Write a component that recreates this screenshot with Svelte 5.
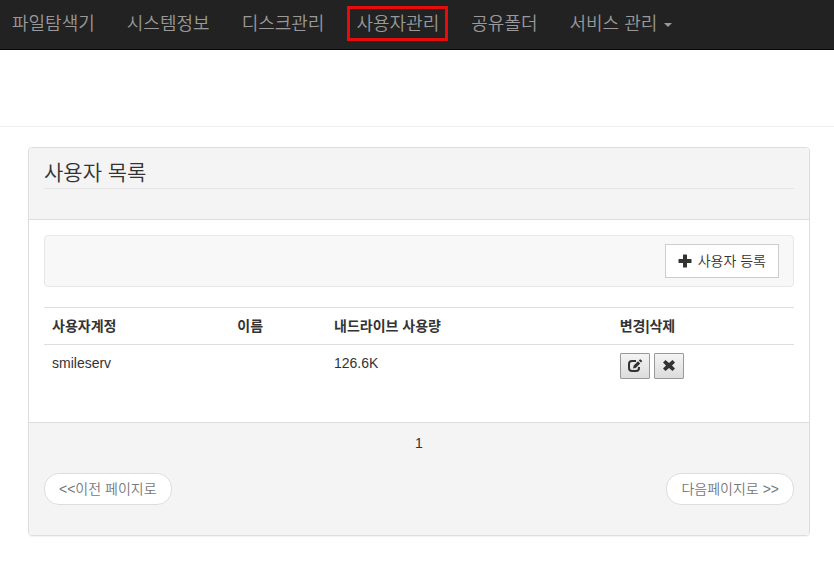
<script>
  const menu = ['파일탐색기', '시스템정보', '디스크관리', '사용자관리', '공유폴더'];
  const current = '사용자관리';

  let users = [
    {account: 'smileserv', name: '', usage: '126.6K'}
  ];
  let page = 1;

  function removeUser(account) {
    users = users.filter((user) => user.account !== account);
  }
</script>

<nav class="navbar">
  {#each menu as item}
    <a href="#top" class:current={item === current}>{item}</a>
  {/each}
  <a href="#top">서비스 관리 <span class="caret"></span></a>
</nav>

<header class="page-header"></header>

<main class="panel">
  <div class="panel-heading">
    <h1>사용자 목록</h1>
  </div>

  <div class="panel-body">
    <div class="toolbar">
      <button type="button" class="btn-add">
        <svg width="14" height="14" viewBox="0 0 14 14" aria-hidden="true">
          <path d="M5.5 .5h3q.5 0 .5.5v4h4q.5 0 .5.5v3q0 .5-.5.5H9v4q0 .5-.5.5h-3Q5 13.500 5 13V9H1q-.5 0-.5-.5v-3Q.5 5 1 5h4V1q0-.5.5-.5z" />
        </svg>
        사용자 등록
      </button>
    </div>

    <table>
      <colgroup>
        <col class="col-account" />
        <col class="col-name" />
        <col class="col-usage" />
        <col />
      </colgroup>
      <thead>
        <tr>
          <th>사용자계정</th>
          <th>이름</th>
          <th>내드라이브 사용량</th>
          <th>변경|삭제</th>
        </tr>
      </thead>
      <tbody>
        {#each users as user}
          <tr>
            <td>{user.account}</td>
            <td>{user.name}</td>
            <td>{user.usage}</td>
            <td>
              <div class="actions">
                <button type="button" aria-label="변경">
                  <svg width="16" height="16" viewBox="0 0 16 16" aria-hidden="true">
                    <path class="line" d="M9 3H5Q2 3 2 6v4q0 3 3 3h4q3 0 3-3V9" />
                    <path d="M6 10.500l.7-3L11 3.200l2.200 2.200L9 9.700zM11.800 2.400l1-1q.4-.4.8 0l1.400 1.400q.4.4 0 .8l-1 1z" />
                  </svg>
                </button>
                <button type="button" aria-label="삭제" on:click={() => removeUser(user.account)}>
                  <svg width="14" height="14" viewBox="0 0 14 14" aria-hidden="true">
                    <path d="M3.500 1L7 4l3.500-3L13 3.500 10 6.500l3 3L10.500 12 7 9l-3.500 3L1 9.500l3-3-3-3z" />
                  </svg>
                </button>
              </div>
            </td>
          </tr>
        {/each}
      </tbody>
    </table>
  </div>

  <footer class="panel-footer">
    <div class="page-number">{page}</div>
    <div class="pager">
      <a href="#top">&lt;&lt;이전 페이지로</a>
      <a href="#top">다음페이지로 &gt;&gt;</a>
    </div>
  </footer>
</main>

<style>
  :global(body) {
    margin: 0;
    background: #fff;
    color: #333;
    font-family: "Liberation Sans", "Noto Sans CJK KR", sans-serif;
    font-size: 14px;
    line-height: 20px;
  }

  .navbar {
    display: flex;
    align-items: center;
    gap: 14px;
    height: 47px;
    padding: 0 3px 2px;
    background: #222;
    border-bottom: 1px solid #080808;
  }

  .navbar a {
    padding: 5px 6px 4px;
    border: 3px solid transparent;
    color: #999;
    font-size: 18px;
    font-weight: 350;
    white-space: nowrap;
    text-decoration: none;
  }

  .navbar a.current {
    border-color: #e60c0c;
  }

  .caret {
    display: inline-block;
    margin-left: 2px;
    vertical-align: middle;
    border-top: 4px solid #999;
    border-right: 4px solid transparent;
    border-left: 4px solid transparent;
  }

  .page-header {
    height: 76px;
    border-bottom: 1px solid #eee;
  }

  .panel {
    margin: 20px 24px 32px 28px;
    border: 1px solid #ddd;
    border-radius: 4px;
    box-shadow: 0 1px 1px rgba(0, 0, 0, 0.05);
  }

  .panel-heading {
    padding: 11px 15px 30px;
    background: #f4f4f4;
    border-bottom: 1px solid #ddd;
    border-radius: 3px 3px 0 0;
  }

  h1 {
    margin: 0;
    padding-bottom: 1px;
    border-bottom: 1px solid #e3e3e3;
    font-size: 21px;
    font-weight: 350;
    line-height: 28px;
  }

  .panel-body {
    padding: 15px 15px 35px;
  }

  .toolbar {
    display: flex;
    justify-content: flex-end;
    margin-bottom: 20px;
    padding: 8px 14px;
    background: #f8f8f8;
    border: 1px solid #e7e7e7;
    border-radius: 4px;
  }

  button {
    color: #333;
    font: inherit;
    cursor: pointer;
  }

  svg {
    fill: #333;
  }

  .line {
    fill: none;
    stroke: #333;
    stroke-width: 2;
  }

  .btn-add {
    display: flex;
    align-items: center;
    gap: 6px;
    height: 34px;
    padding: 0 12px;
    background: #fff;
    border: 1px solid #ccc;
    font-weight: 350;
  }

  table {
    width: 100%;
    border-collapse: collapse;
    table-layout: fixed;
  }

  .col-account {
    width: 24.7%;
  }

  .col-name {
    width: 12.9%;
  }

  .col-usage {
    width: 38.1%;
  }

  th,
  td {
    padding: 8px;
    border-top: 1px solid #ddd;
    text-align: left;
    vertical-align: top;
  }

  .actions {
    display: flex;
    gap: 4px;
  }

  .actions button {
    display: flex;
    align-items: center;
    justify-content: center;
    width: 30px;
    height: 26px;
    padding: 0;
    background: linear-gradient(#f4f4f4, #dcdcdc);
    border: 1px solid #999;
    border-radius: 1px;
  }

  .panel-footer {
    padding: 10px 15px 30px;
    background: #f4f4f4;
    border-top: 1px solid #ddd;
    border-radius: 0 0 3px 3px;
  }

  .page-number {
    margin-bottom: 20px;
    text-align: center;
  }

  .pager {
    display: flex;
    justify-content: space-between;
  }

  .pager a {
    padding: 5px 14px;
    background: #fff;
    border: 1px solid #ddd;
    border-radius: 15px;
    color: #777;
    font-weight: 350;
    text-decoration: none;
  }
</style>
